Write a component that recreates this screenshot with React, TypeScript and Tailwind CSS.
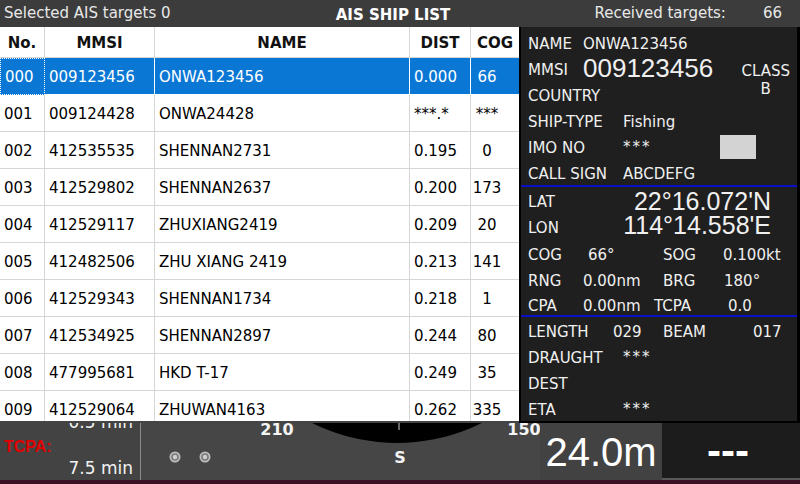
import React from "react";

interface Target {
  no: string;
  mmsi: string;
  name: string;
  dist: string;
  cog: string;
}

const targets: Target[] = [
  { no: "000", mmsi: "009123456", name: "ONWA123456", dist: "0.000", cog: "66" },
  { no: "001", mmsi: "009124428", name: "ONWA24428", dist: "***.*", cog: "***" },
  { no: "002", mmsi: "412535535", name: "SHENNAN2731", dist: "0.195", cog: "0" },
  { no: "003", mmsi: "412529802", name: "SHENNAN2637", dist: "0.200", cog: "173" },
  { no: "004", mmsi: "412529117", name: "ZHUXIANG2419", dist: "0.209", cog: "20" },
  { no: "005", mmsi: "412482506", name: "ZHU XIANG 2419", dist: "0.213", cog: "141" },
  { no: "006", mmsi: "412529343", name: "SHENNAN1734", dist: "0.218", cog: "1" },
  { no: "007", mmsi: "412534925", name: "SHENNAN2897", dist: "0.244", cog: "80" },
  { no: "008", mmsi: "477995681", name: "HKD T-17", dist: "0.249", cog: "35" },
  { no: "009", mmsi: "412529064", name: "ZHUWAN4163", dist: "0.262", cog: "335" },
];

const cols = "grid grid-cols-[45px_110px_255px_61px_48px]";

// little ring markers on the compass strip
const Dot = ({ cx, cy }: { cx: number; cy: number }) => (
  <g>
    <circle cx={cx} cy={cy} r={5.5} fill="#bdbdbd" />
    <circle cx={cx} cy={cy} r={3.8} fill="#7a7a7a" />
    <circle cx={cx} cy={cy} r={2.2} fill="#cfcfcf" />
  </g>
);

const App: React.FC = () => {
  return (
    <div className="w-[800px] h-[484px] overflow-hidden bg-[#444444] font-['DejaVu_Sans',sans-serif] flex flex-col">
      {/* title bar */}
      <div className="h-[27px] shrink-0 flex items-center bg-[#3c3c3c] text-[15px] text-[#e8e8e8]">
        <div className="flex-1 pl-[4px]">Selected AIS targets 0</div>
        <div className="font-bold text-[15px] text-white pt-[3px]">AIS SHIP LIST</div>
        <div className="flex-1 flex justify-end gap-[37px] pr-[18px]">
          <span>Received targets:</span>
          <span>66</span>
        </div>
      </div>

      {/* list + details */}
      <div className="h-[396px] shrink-0 flex">
        <div className="w-[519px] h-[394px] bg-white overflow-hidden text-[15px] text-black">
          <div className={`${cols} h-[31px] font-bold text-[#111]`}>
            <div className="flex items-center justify-center pt-[3px] border-r border-b border-[#d6d6d6]">No.</div>
            <div className="flex items-center justify-center pt-[3px] border-r border-b border-[#d6d6d6]">MMSI</div>
            <div className="flex items-center justify-center pt-[3px] border-r border-b border-[#d6d6d6]">NAME</div>
            <div className="flex items-center justify-center pt-[3px] border-r border-b border-[#d6d6d6]">DIST</div>
            <div className="flex items-center justify-center pt-[3px] border-b border-[#d6d6d6]">COG</div>
          </div>
          {targets.map((t, i) => {
            const sel = i === 0;
            const cell = sel
              ? "flex items-center pt-[2px] border-r border-b border-white"
              : "flex items-center pt-[2px] border-r border-b border-[#d6d6d6]";
            return (
              <div
                key={t.no}
                className={`${cols} h-[37px] ${sel ? "bg-[#0a77d5] text-white" : ""}`}
              >
                <div className={`${cell} pl-[4px] ${sel ? "border border-dotted border-[#b9d3ee]" : ""}`}>
                  {t.no}
                </div>
                <div className={`${cell} pl-[4px]`}>{t.mmsi}</div>
                <div className={`${cell} pl-[4px]`}>{t.name}</div>
                <div className={`${cell} pl-[4px]`}>{t.dist}</div>
                <div className={`${cell} justify-center pr-[16px] border-r-0`}>{t.cog}</div>
              </div>
            );
          })}
        </div>

        <div className="flex-1 h-full bg-[#1f1f1f] border-l-2 border-r-[3px] border-b-2 border-black text-[15px] text-[#f0f0f0] flex flex-col pt-[2px]">
          <div className="pl-[7px]">
            <div className="h-[26px] flex items-center pt-[5px]">
              <span className="w-[55px]">NAME</span>
              <span>ONWA123456</span>
            </div>
            <div className="h-[26px] flex items-center">
              <span className="w-[55px] pt-[5px]">MMSI</span>
              <span className="font-['Liberation_Sans',Arial,sans-serif] text-[26px] leading-none">009123456</span>
              <div className="ml-auto mr-[7px] h-[18px] flex flex-col items-center leading-[18px] mt-[6px]">
                <span>CLASS</span>
                <span>B</span>
              </div>
            </div>
            <div className="h-[26px] flex items-center pt-[5px]">COUNTRY</div>
            <div className="h-[26px] flex items-center pt-[5px]">
              <span className="w-[95px]">SHIP-TYPE</span>
              <span>Fishing</span>
            </div>
            <div className="h-[26px] flex items-center pt-[5px]">
              <span className="w-[95px]">IMO NO</span>
              <span className="tracking-[2px] text-[15px] -mt-[2px]">***</span>
              <div className="ml-auto mr-[41px] w-[36px] h-[24px] bg-[#d3d3d3] -mt-[3px]" />
            </div>
            <div className="h-[26px] flex items-center pt-[5px]">
              <span className="w-[95px]">CALL SIGN</span>
              <span>ABCDEFG</span>
            </div>
          </div>

          <div className="h-[2px] bg-[#0a10c8]" />

          <div className="pl-[7px]">
            <div className="h-[26px] flex items-center justify-between pr-[26px] pt-[2px]">
              <span className="pt-[3px]">LAT</span>
              <span className="font-['Liberation_Sans',Arial,sans-serif] text-[25px] leading-none">22°16.072'N</span>
            </div>
            <div className="h-[26px] flex items-center justify-between pr-[26px]">
              <span className="pt-[5px]">LON</span>
              <span className="font-['Liberation_Sans',Arial,sans-serif] text-[25px] leading-none -mt-[1px]">114°14.558'E</span>
            </div>
            <div className="h-[26px] grid grid-cols-[55px_80px_60px_1fr] items-center pt-[5px]">
              <span>COG</span>
              <span className="pl-[5px]">66°</span>
              <span>SOG</span>
              <span>0.100kt</span>
            </div>
            <div className="h-[25px] grid grid-cols-[55px_80px_60px_1fr] items-center pt-[5px]">
              <span>RNG</span>
              <span>0.00nm</span>
              <span>BRG</span>
              <span className="pl-[1px]">180°</span>
            </div>
            <div className="h-[25px] grid grid-cols-[55px_80px_60px_1fr] items-center pt-[5px]">
              <span>CPA</span>
              <span>0.00nm</span>
              <span className="-ml-[9px]">TCPA</span>
              <span className="pl-[5px]">0.0</span>
            </div>
          </div>

          <div className="h-[2px] bg-[#0a10c8]" />

          <div className="pl-[7px]">
            <div className="h-[26px] grid grid-cols-[85px_50px_90px_1fr] items-center pt-[4px]">
              <span>LENGTH</span>
              <span>029</span>
              <span>BEAM</span>
              <span>017</span>
            </div>
            <div className="h-[26px] flex items-center pt-[4px]">
              <span className="w-[95px]">DRAUGHT</span>
              <span className="tracking-[2px] text-[15px] -mt-[2px]">***</span>
            </div>
            <div className="h-[26px] flex items-center pt-[4px]">DEST</div>
            <div className="h-[26px] flex items-center pt-[4px]">
              <span className="w-[95px]">ETA</span>
              <span className="tracking-[2px] text-[15px] -mt-[2px]">***</span>
            </div>
          </div>
        </div>
      </div>

      {/* chart status strip underneath */}
      <div className="flex-1 flex flex-col">
        <div className="flex-1 flex overflow-hidden">
          <div className="w-[141px] border-r border-[#8a8a8a] bg-[#434343] text-[17px] text-[#f2f2f2]">
            <div className="h-[20px] leading-[20px] -mt-[11px] text-right pr-[7px]">0.5 min</div>
            <div className="mt-[5px] h-[20px] leading-[20px] pl-[4px] font-['Liberation_Sans',Arial,sans-serif] font-bold text-[16px] text-[#e00000]">
              TCPA:
            </div>
            <div className="mt-[1px] h-[20px] leading-[20px] text-right pr-[7px]">7.5 min</div>
          </div>
          <div className="w-[399px] relative bg-[#464646]">
            <svg width="399" height="57" className="absolute inset-0">
              <circle cx={256} cy={-170} r={190} fill="#000" />
              <line x1={258} y1={0} x2={258} y2={7} stroke="#cfcfcf" strokeWidth={1} />
              <text x={136} y={12} fill="#f4f4f4" fontSize={16} fontWeight="bold" textAnchor="middle" fontFamily="DejaVu Sans">210</text>
              <text x={383} y={12} fill="#f4f4f4" fontSize={16} fontWeight="bold" textAnchor="middle" fontFamily="DejaVu Sans">150</text>
              <text x={259} y={40} fill="#f4f4f4" fontSize={16} fontWeight="bold" textAnchor="middle" fontFamily="DejaVu Sans">S</text>
              <Dot cx={34} cy={34} />
              <Dot cx={64} cy={34} />
            </svg>
          </div>
          <div className="w-[122px] bg-[#424242] flex items-center justify-center font-['Liberation_Sans',Arial,sans-serif] text-[40px] text-white leading-none">
            24.0m
          </div>
          <div className="flex-1 bg-[#1c1c1c] border-b-2 border-[#5a5a5a] flex items-center justify-center font-['Liberation_Sans',Arial,sans-serif] font-bold text-[42px] text-white leading-none pr-[6px]">
            ---
          </div>
        </div>
        <div className="h-[4px] bg-[#3a1426]" />
      </div>
    </div>
  );
};

export default App;
